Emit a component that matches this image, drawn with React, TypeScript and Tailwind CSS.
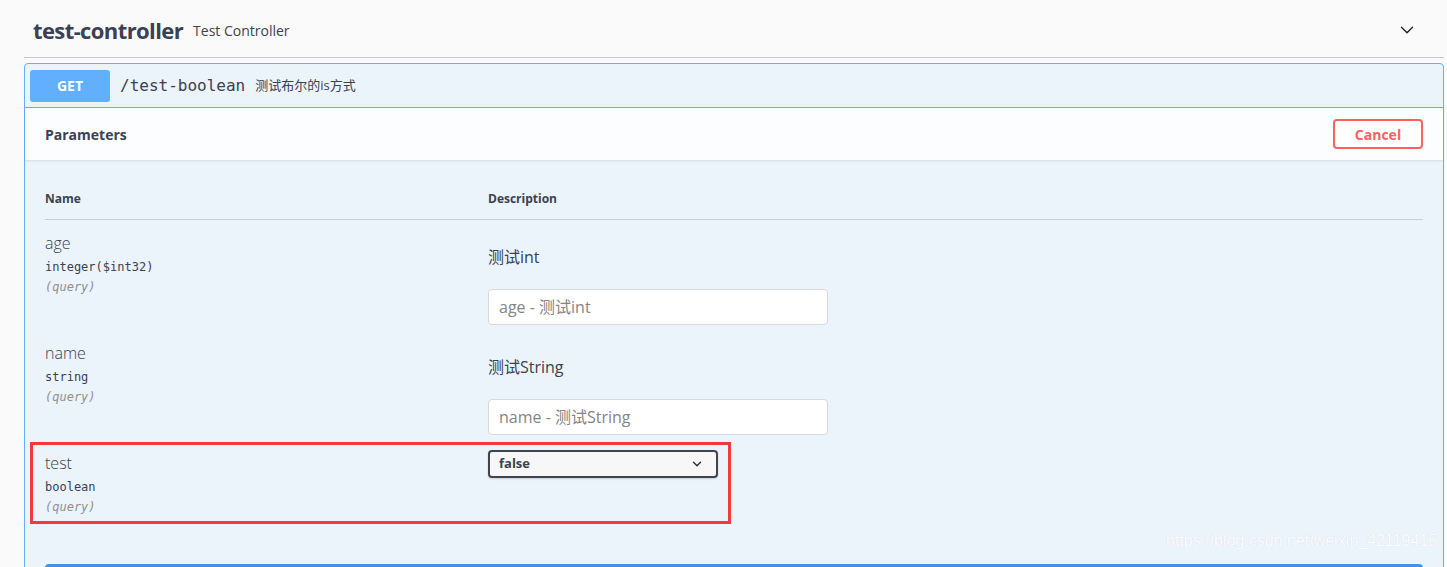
import { ChevronDown } from 'lucide-react';

const sans = "font-['Open_Sans','Noto_Sans_CJK_SC',sans-serif]";
const mono = "font-['DejaVu_Sans_Mono','Liberation_Mono',monospace]";

interface Param {
  name: string;
  type: string;
  desc?: string;
  placeholder?: string;
  select?: string;
  marked?: boolean;
}

const params: Param[] = [
  { name: 'age', type: 'integer($int32)', desc: '测试int', placeholder: 'age - 测试int' },
  { name: 'name', type: 'string', desc: '测试String', placeholder: 'name - 测试String' },
  { name: 'test', type: 'boolean', select: 'false', marked: true },
];

function ParamRow({ p }: { p: Param }) {
  return (
    <div className="relative flex h-[110px]">
      {p.marked && (
        <div className="absolute left-[-15px] top-[2px] h-[82px] w-[701px] border-[3px] border-[#f33a3a]" />
      )}
      <div className="w-[443px] shrink-0 pt-[13px]">
        <div className="text-[16px] leading-[20px] font-light text-[#3b4151]">{p.name}</div>
        <div className={`${mono} mt-[6px] text-[12px] leading-[16px] text-[#3b4151]`}>{p.type}</div>
        <div className={`${mono} mt-[4px] text-[12px] leading-[16px] italic text-[#909090]`}>(query)</div>
      </div>
      <div className="flex-1">
        {p.desc && (
          <>
            <div className="pt-[27px] text-[16px] leading-[20px] text-[#3b4151]">{p.desc}</div>
            <div className="mt-[22px] flex h-[36px] w-[340px] items-center rounded-[4px] border border-[#d9d9d9] bg-white px-[10px] text-[16px] text-[#858585]">
              {p.placeholder}
            </div>
          </>
        )}
        {p.select && (
          <div className="mt-[10px] flex h-[28px] w-[230px] items-center justify-between rounded-[4px] border-2 border-[#41444e] bg-[#f7f7f7] pl-[9px] pr-[12px] shadow-[0_1px_2px_rgba(0,0,0,0.15)]">
            <span className="text-[13px] font-bold text-[#3b4151]">{p.select}</span>
            <ChevronDown className="h-[14px] w-[14px] text-[#303030]" strokeWidth={2.5} />
          </div>
        )}
      </div>
    </div>
  );
}

export default function App() {
  return (
    <div className={`${sans} relative h-[567px] overflow-hidden bg-[#fafafa] pl-[24px] pr-[3px]`}>
      {/* tag header */}
      <div className="flex h-[58px] items-center border-b border-[#c8c8c8] pl-[9px] pr-[26px] pt-[3px]">
        <span className="text-[22px] font-bold tracking-[-0.6px] text-[#3b4151]">test-controller</span>
        <span className="ml-[10px] text-[14px] text-[#3b4151]">Test Controller</span>
        <ChevronDown className="ml-auto h-[22px] w-[22px] text-[#222]" strokeWidth={1.5} />
      </div>

      {/* operation block */}
      <div className="mt-[5px] rounded-[4px] border border-[#61affe] bg-[#ebf3fb]">
        <div className="flex h-[44px] items-center border-b border-[#61affe] px-[5px]">
          <div className="flex h-[32px] w-[80px] items-center justify-center rounded-[3px] bg-[#61affe] text-[14px] font-bold text-white">
            GET
          </div>
          <span className={`${mono} ml-[10px] text-[16px] text-[#3b4151]`}>/test-boolean</span>
          <span className="ml-[10px] text-[13px] text-[#3b4151]">测试布尔的is方式</span>
        </div>

        <div className="flex h-[52px] items-center justify-between bg-[#fcfdfe] px-[20px] shadow-[0_1px_2px_rgba(0,0,0,0.1)]">
          <span className="text-[14px] font-bold text-[#3b4151]">Parameters</span>
          <div className="flex h-[30px] w-[90px] items-center justify-center rounded-[4px] border-2 border-[#ff6060] bg-white text-[14px] font-bold text-[#ff6060]">
            Cancel
          </div>
        </div>

        <div className="px-[20px] pt-[30px]">
          <div className="flex border-b border-[#c9ced8] pb-[11px] text-[12px] font-bold text-[#3b4151]">
            <div className="w-[443px]">Name</div>
            <div>Description</div>
          </div>
          {params.map((p) => (
            <ParamRow key={p.name} p={p} />
          ))}
          <div className="mt-[14px] h-[40px] rounded-[4px] bg-[#4990e2]" />
        </div>
      </div>

      <div className="absolute bottom-[14px] right-[10px] text-[16px] font-['Liberation_Sans',sans-serif] text-[#fbfcfe] [text-shadow:0_0_1px_#d2d8df]">
        https://blog.csdn.net/weixin_42119415
      </div>
    </div>
  );
}
